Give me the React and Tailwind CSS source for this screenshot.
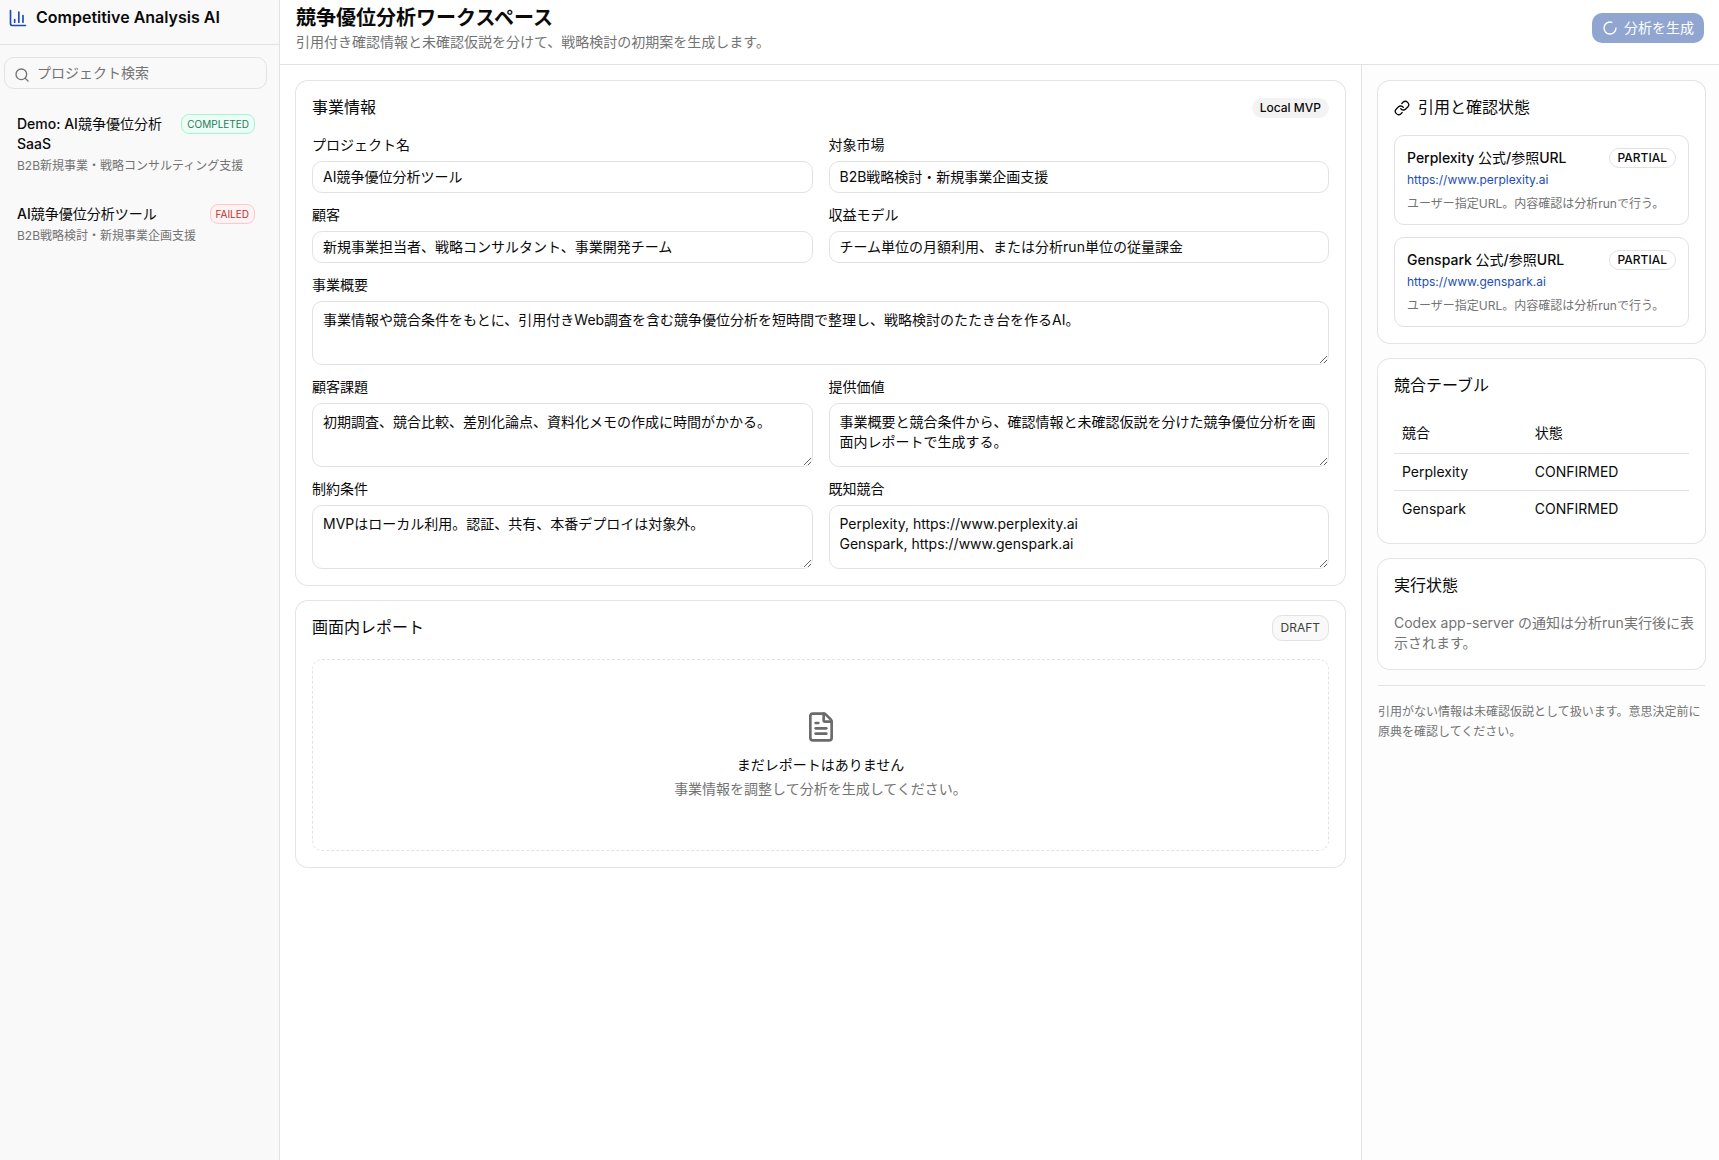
import { useState } from "react";
import { ChartColumn, FileText, Link, LoaderCircle, Search } from "lucide-react";

const projects = [
  {
    id: 1,
    name: "Demo: AI競争優位分析 SaaS",
    market: "B2B新規事業・戦略コンサルティング支援",
    status: "COMPLETED",
  },
  {
    id: 2,
    name: "AI競争優位分析ツール",
    market: "B2B戦略検討・新規事業企画支援",
    status: "FAILED",
  },
];

const statusStyles = {
  COMPLETED: "border-[#a4f4cf] bg-[#ecfdf5] text-[#2a7a5c]",
  FAILED: "border-[#ffc9c9] bg-[#fef2f2] text-[#b83232]",
};

const fields = [
  { name: "name", label: "プロジェクト名", value: "AI競争優位分析ツール" },
  { name: "market", label: "対象市場", value: "B2B戦略検討・新規事業企画支援" },
  { name: "customer", label: "顧客", value: "新規事業担当者、戦略コンサルタント、事業開発チーム" },
  { name: "revenue", label: "収益モデル", value: "チーム単位の月額利用、または分析run単位の従量課金" },
  {
    name: "summary",
    label: "事業概要",
    value: "事業情報や競合条件をもとに、引用付きWeb調査を含む競争優位分析を短時間で整理し、戦略検討のたたき台を作るAI。",
    multiline: true,
    wide: true,
  },
  {
    name: "problem",
    label: "顧客課題",
    value: "初期調査、競合比較、差別化論点、資料化メモの作成に時間がかかる。",
    multiline: true,
  },
  {
    name: "proposition",
    label: "提供価値",
    value: "事業概要と競合条件から、確認情報と未確認仮説を分けた競争優位分析を画面内レポートで生成する。",
    multiline: true,
  },
  {
    name: "constraints",
    label: "制約条件",
    value: "MVPはローカル利用。認証、共有、本番デプロイは対象外。",
    multiline: true,
  },
  {
    name: "competitors",
    label: "既知競合",
    value: "Perplexity, https://www.perplexity.ai\nGenspark, https://www.genspark.ai",
    multiline: true,
  },
];

const sources = [
  { name: "Perplexity", url: "https://www.perplexity.ai" },
  { name: "Genspark", url: "https://www.genspark.ai" },
];

// Latin runs are medium, Japanese runs stay regular
const MixedText = ({ children }) =>
  children.split(/([\u3000-\u9fff]+)/).map((part, i) => (
    <span key={i} className={i % 2 ? "font-normal" : "font-medium"}>
      {part}
    </span>
  ));

const Card = ({ title, icon, action, roomy, children }) => (
  <section className="rounded-xl bg-white px-4 pt-3.5 pb-4 ring-1 ring-[#e4e4e4]">
    <div className={`flex h-[26px] items-center justify-between ${roomy ? "mb-[18px]" : "mb-3.5"}`}>
      <h2 className="flex items-center gap-2 text-base leading-6">
        {icon}
        <span className="pb-0.5">{title}</span>
      </h2>
      {action}
    </div>
    {children}
  </section>
);

const Field = ({ field, value, onChange }) => (
  <div className={field.wide ? "col-span-2 flex flex-col gap-2" : "flex flex-col gap-2"}>
    <label htmlFor={field.name} className="pb-0.5 text-sm leading-3">
      {field.label}
    </label>
    {field.multiline ? (
      <textarea
        id={field.name}
        value={value}
        onChange={onChange}
        className="h-16 w-full rounded-[10px] border border-[#e2e2e2] px-2.5 py-2 text-sm outline-none"
      />
    ) : (
      <input
        id={field.name}
        type="text"
        value={value}
        onChange={onChange}
        className="h-8 w-full rounded-[10px] border border-[#e2e2e2] px-2.5 pb-0.5 text-sm outline-none"
      />
    )}
  </div>
);

const Sidebar = () => {
  const [query, setQuery] = useState("");
  const visible = projects.filter((project) => project.name.includes(query));

  return (
    <aside className="w-70 shrink-0 border-r border-[#e2e2e2] bg-[#f9f9f9]">
      <div className="flex h-[45px] items-start gap-2 border-b border-[#e2e2e2] pt-2 pl-2">
        <ChartColumn className="size-5 text-[#1d4db0]" />
        <span className="text-base leading-[18px] font-semibold">Competitive Analysis AI</span>
      </div>
      <div className="py-3 pr-3 pl-1">
        <div className="relative mb-3">
          <Search className="absolute top-2.5 left-2.5 size-4 text-[#737373]" />
          <input
            type="search"
            aria-label="プロジェクト検索"
            placeholder="プロジェクト検索"
            value={query}
            onChange={(e) => setQuery(e.target.value)}
            className="h-8 w-full rounded-[10px] border border-[#e2e2e2] pr-2.5 pb-0.5 pl-8 text-sm outline-none placeholder:text-[#737373]"
          />
        </div>
        <div className="flex flex-col gap-1">
          {visible.map((project) => (
            <button
              key={project.id}
              type="button"
              className="rounded-lg border border-transparent py-3 pr-[11px] pl-3 text-left"
            >
              <span className="flex items-start justify-between gap-2">
                <span className="text-sm">
                  <MixedText>{project.name}</MixedText>
                </span>
                <span
                  className={`shrink-0 rounded-lg border px-[5px] text-[10px] leading-[18px] ${statusStyles[project.status]}`}
                >
                  {project.status}
                </span>
              </span>
              <span className="mt-1 block text-xs text-[#737373]">{project.market}</span>
            </button>
          ))}
        </div>
      </div>
    </aside>
  );
};

const App = () => {
  const [form, setForm] = useState(Object.fromEntries(fields.map((field) => [field.name, field.value])));

  const handleChange = (name) => (e) => {
    setForm({ ...form, [name]: e.target.value });
  };

  return (
    <div
      lang="ja"
      className="flex min-h-screen bg-white font-['Inter','Noto_Sans_CJK_JP',sans-serif] text-[#0a0a0a]"
    >
      <Sidebar />

      <div className="flex min-w-0 flex-1 flex-col">
        <header className="flex h-[65px] items-start justify-between border-b border-[#e2e2e2] pr-[15px] pl-4">
          <div className="pt-1">
            <h1 className="text-xl leading-7 font-semibold">競争優位分析ワークスペース</h1>
            <p className="text-sm text-[#737373]">
              引用付き確認情報と未確認仮説を分けて、戦略検討の初期案を生成します。
            </p>
          </div>
          <button
            type="button"
            disabled
            className="mt-[13px] flex h-[30px] items-center gap-1.5 rounded-[10px] bg-[#234fa3] px-2.5 text-sm text-white opacity-50"
          >
            <LoaderCircle className="size-4" />
            分析を生成
          </button>
        </header>

        <div className="flex flex-1">
          <main className="flex min-w-0 flex-1 flex-col gap-4 p-4">
            <Card
              title="事業情報"
              roomy
              action={
                <span className="rounded-full bg-[#f3f3f3] px-2 text-xs leading-5 font-medium">Local MVP</span>
              }
            >
              <form className="grid grid-cols-2 gap-4">
                {fields.map((field) => (
                  <Field key={field.name} field={field} value={form[field.name]} onChange={handleChange(field.name)} />
                ))}
              </form>
            </Card>

            <Card
              title="画面内レポート"
              roomy
              action={
                <span className="rounded-[10px] border border-[#e2e2e2] bg-[#f9f9f9] px-2 text-xs leading-6 text-[#404040]">
                  DRAFT
                </span>
              }
            >
              <div className="flex h-48 flex-col items-center justify-center rounded-[10px] border border-dashed border-[#e2e2e2] text-sm">
                <FileText className="size-8 text-[#6b6b6b]" />
                <p className="mt-3">まだレポートはありません</p>
                <p className="mt-1 text-[#737373]">事業情報を調整して分析を生成してください。</p>
              </div>
            </Card>
          </main>

          <aside className="flex w-[358px] shrink-0 flex-col gap-4 border-l border-[#e2e2e2] bg-[#fdfdfd] py-4 pr-3.5 pl-4">
            <Card title="引用と確認状態" icon={<Link className="size-4" />}>
              <div className="flex flex-col gap-3">
                {sources.map((source) => (
                  <div key={source.name} className="rounded-[10px] border border-[#e2e2e2] p-3">
                    <div className="flex items-center justify-between">
                      <h3 className="text-sm">
                        <MixedText>{`${source.name} 公式/参照URL`}</MixedText>
                      </h3>
                      <span className="rounded-full border border-[#e2e2e2] px-2 text-xs leading-[18px] font-medium">
                        PARTIAL
                      </span>
                    </div>
                    <a href={source.url} className="mt-1 block text-xs text-[#1d4db0]">
                      {source.url}
                    </a>
                    <p className="mt-2 text-xs text-[#737373]">ユーザー指定URL。内容確認は分析runで行う。</p>
                  </div>
                ))}
              </div>
            </Card>

            <Card title="競合テーブル">
              <table className="w-full text-left text-sm">
                <thead>
                  <tr className="border-b border-[#e2e2e2]">
                    <th className="h-10 w-[45%] px-2 font-normal">競合</th>
                    <th className="h-10 px-2 font-normal">状態</th>
                  </tr>
                </thead>
                <tbody>
                  {sources.map((source) => (
                    <tr key={source.name} className="border-b border-[#e2e2e2] last:border-0">
                      <td className="p-2">{source.name}</td>
                      <td className="p-2">CONFIRMED</td>
                    </tr>
                  ))}
                </tbody>
              </table>
            </Card>

            <Card title="実行状態">
              <p className="-mr-2 text-sm text-[#737373]">Codex app-server の通知は分析run実行後に表示されます。</p>
            </Card>

            <hr className="border-[#e2e2e2]" />
            <p className="text-xs leading-5 text-[#737373]">
              引用がない情報は未確認仮説として扱います。意思決定前に原典を確認してください。
            </p>
          </aside>
        </div>
      </div>
    </div>
  );
};

export default App;
